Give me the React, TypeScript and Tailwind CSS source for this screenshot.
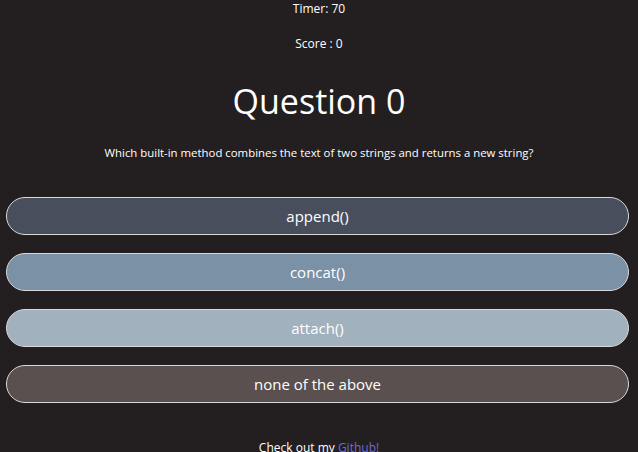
import React from "react";

const answers = [
  { text: "append()", color: "bg-[#484e5b]" },
  { text: "concat()", color: "bg-[#7a91a6]" },
  { text: "attach()", color: "bg-[#a1b1bd]" },
  { text: "none of the above", color: "bg-[#5a504f]" },
];

const App = () => {
  return (
    <div
      className="min-h-screen w-full bg-[#231f20] text-white flex flex-col items-center"
      style={{ fontFamily: '"Open Sans", "Noto Sans", sans-serif' }}
    >
      {/* Header stats */}
      <p className="text-[12px] leading-[18px] mt-0">Timer: 70</p>
      <p className="text-[12px] leading-[18px] mt-[17px]">Score : 0</p>

      <h1 className="text-[34px] leading-[40px] mt-[28px]">Question 0</h1>
      <p className="text-[11.4px] leading-[18px] mt-[23px]">
        Which built-in method combines the text of two strings and returns a new string?
      </p>

      {/* Answers */}
      <div className="w-full pl-[6px] pr-[9px] mt-[35px] flex flex-col gap-[18px]">
        {answers.map((a) => (
          <button
            key={a.text}
            className={`${a.color} w-full h-[38px] rounded-full border border-[#d8d8d8] text-[15px] text-white`}
          >
            {a.text}
          </button>
        ))}
      </div>

      <p className="text-[12px] leading-[18px] mt-[36px]">
        Check out my <a className="text-[#6b6bd6]">Github!</a>
      </p>
    </div>
  );
};

export default App;
